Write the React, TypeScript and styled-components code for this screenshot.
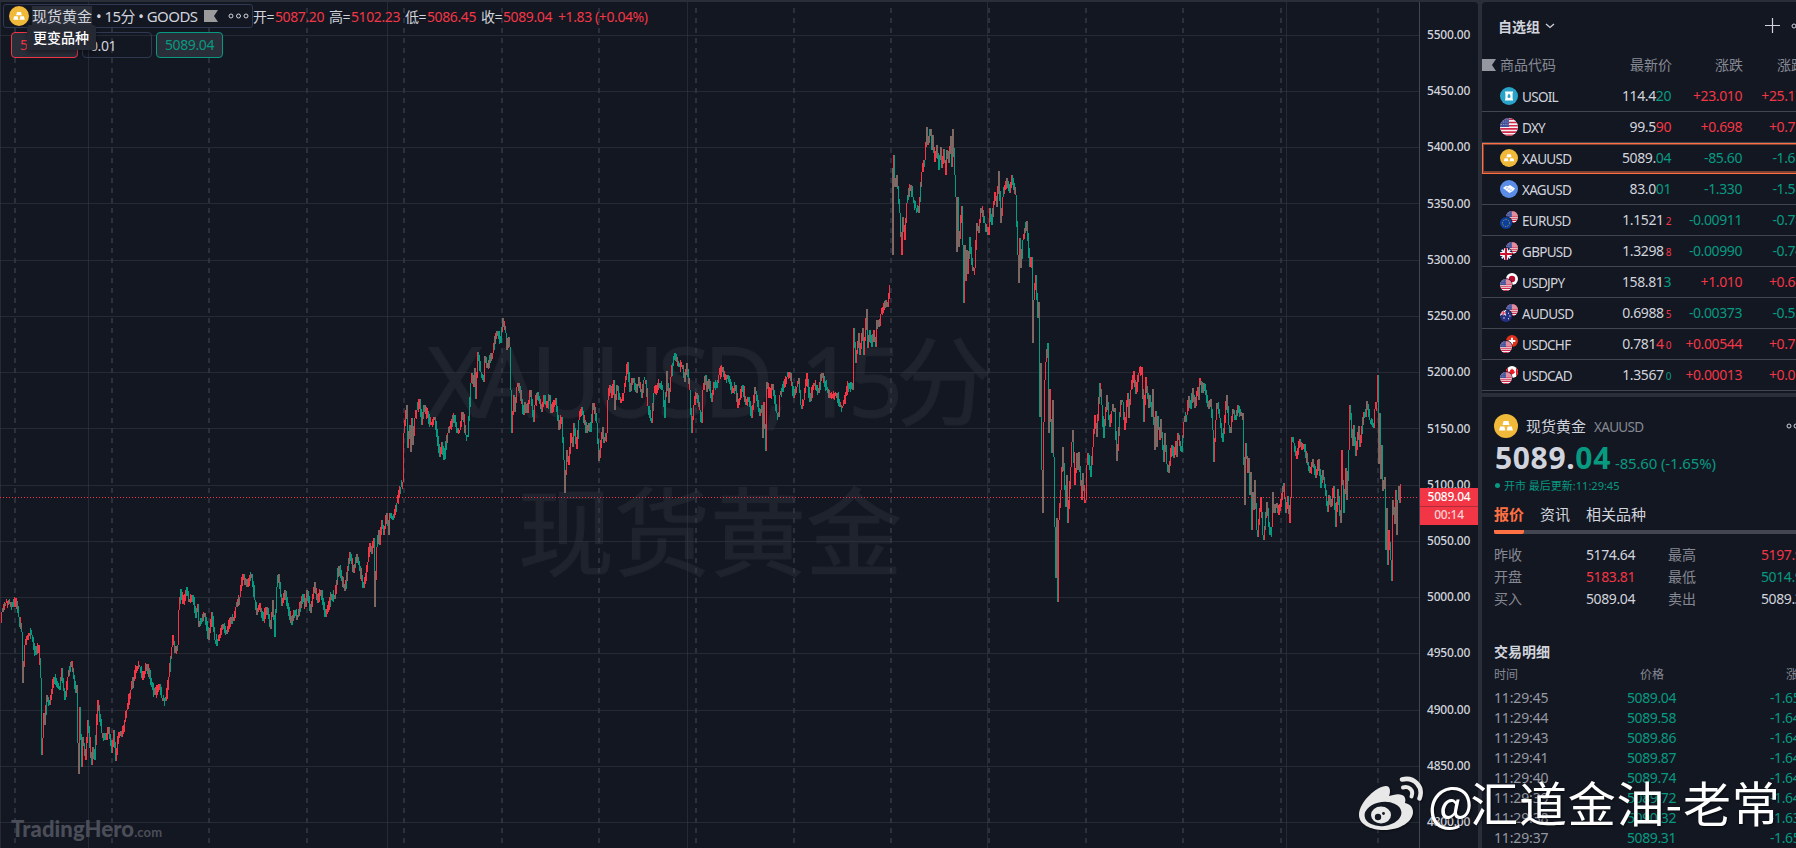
import React from 'react';
import styled, { createGlobalStyle, css } from 'styled-components';

const UP = '#f23645';
const DOWN = '#089981';
const TEXT = '#d1d4dc';
const MUTED = '#868993';
const BG = '#131722';
const LINE = '#2a2e39';

const GlobalStyle = createGlobalStyle`
  * { box-sizing: border-box; }
  body {
    margin: 0;
    overflow: hidden;
    background: ${BG};
    color: ${TEXT};
    font-family: "Noto Sans", "Noto Sans CJK SC", sans-serif;
    font-size: 14px;
    letter-spacing: -0.4px;
    white-space: nowrap;
  }
  svg { flex: none; }
`;

const Root = styled.div`
  position: relative;
  display: flex;
  width: 100vw;
  height: 100vh;
  padding-top: 2px;
  gap: 4px;
  overflow: hidden;
  background: ${LINE};
`;

const ChartPanel = styled.section`
  position: relative;
  display: flex;
  flex: none;
  width: 1478px;
  height: 846px;
  background: ${BG};
  border-top-right-radius: 4px;
  overflow: hidden;
`;

const Plot = styled.svg`
  display: block;
  flex: none;
  width: 1419px;
  height: 846px;
`;

const PriceScale = styled.div`
  flex: 1;
  border-left: 1px solid #434651;
  padding-top: 5px;
`;

const ScaleLabel = styled.div`
  height: 56.23px;
  line-height: 56.23px;
  padding-left: 7px;
  font-size: 12px;
  font-weight: 500;
  letter-spacing: -0.2px;
`;

const PriceTag = styled.div`
  position: absolute;
  right: 0;
  top: 486px;
  width: 58px;
  height: 37px;
  background: ${UP};
  color: #fff;
  font-size: 12px;
  font-weight: 500;
  letter-spacing: -0.2px;
  text-align: center;
  div { height: 18px; line-height: 17px; }
  div + div { line-height: 15px; border-top: 1px solid #b02c3b; color: #fbd0d4; }
`;

const Legend = styled.div`
  position: absolute;
  left: 3px;
  top: 2px;
  display: flex;
  align-items: center;
  height: 24px;
`;

const SymbolBox = styled.div`
  display: flex;
  align-items: center;
  width: 250px;
  height: 24px;
  padding-left: 5px;
  border: 1px solid #2f3a52;
  border-radius: 3px;
  background: ${BG};
`;

const SymbolName = styled.span<{ $left: number; $width: number; $active?: boolean }>`
  margin-left: ${p => p.$left}px;
  width: ${p => p.$width}px;
  line-height: 20px;
  font-size: 15px;
  letter-spacing: ${p => p.$active ? 0 : -0.55}px;
  ${p => p.$active && css`background: ${LINE};`}
`;

const Ohlc = styled.span<{ $gap: number }>`
  width: 49px;
  color: ${UP};
  margin-right: ${p => p.$gap}px;
`;

const OhlcKey = styled.span`
  width: 22px;
`;

const OrderRow = styled.div`
  position: absolute;
  left: 11px;
  top: 30px;
  display: flex;
  gap: 4px;
`;

const OrderBox = styled.div<{ $color: string; $filled?: boolean }>`
  width: 67px;
  height: 26px;
  line-height: 24px;
  padding-left: 8px;
  border: 1px solid ${p => p.$color};
  border-radius: 4px;
  color: ${p => p.$color};
  background: ${p => p.$filled ? LINE : BG};
`;

const AmountBox = styled(OrderBox)`
  width: 70px;
  padding-left: 7px;
  line-height: 26px;
  color: ${TEXT};
  background: transparent;
`;

const Tooltip = styled.div`
  position: absolute;
  left: 27px;
  top: 23px;
  width: 69px;
  height: 25px;
  line-height: 25px;
  padding-left: 6px;
  border-radius: 3px;
  background: #252934;
  color: #fff;
  font-weight: 500;
  letter-spacing: 0;
  box-shadow: 0 3px 5px rgba(0, 0, 0, 0.35);
`;

const Brand = styled.div`
  position: absolute;
  left: 11px;
  top: 813px;
  color: #4b4e59;
  font-family: Lato, sans-serif;
  font-size: 22px;
  font-weight: 900;
  line-height: 28px;
  letter-spacing: 0.1px;
  span { font-size: 13px; font-weight: 700; }
`;

const Side = styled.aside`
  display: flex;
  flex-direction: column;
  flex: none;
  gap: 4px;
  width: 332px;
`;

const Watchlist = styled.div`
  height: 391px;
  background: ${BG};
  border-top-left-radius: 4px;
`;

const WatchTitle = styled.div`
  display: flex;
  align-items: center;
  height: 47px;
  padding: 0 0 0 16px;
  font-weight: 700;
  letter-spacing: 0;
  .chevron { margin-left: 5px; }
  .plus { margin-left: 210px; }
  .more { margin-left: 11px; }
`;

const WatchHead = styled.div`
  display: grid;
  grid-template-columns: 18px 88px 84px 71px 71px;
  align-items: center;
  height: 32px;
  color: ${MUTED};
  letter-spacing: 0;
  text-align: right;
  span { padding-bottom: 2px; }
  span:nth-child(2) { text-align: left; }
  span:last-child { text-align: left; padding-left: 34px; }
`;

const WatchRow = styled.div<{ $selected?: boolean }>`
  display: grid;
  grid-template-columns: 40px 65px 84px 71px 72px;
  align-items: center;
  height: 31px;
  border-bottom: 1px solid #434651;
  text-align: right;
  line-height: 18px;
  svg { margin-left: 18px; }
  ${p => p.$selected && css`
    outline: 1px solid #ff7043;
    outline-offset: -1px;
    border-bottom-color: #ff7043;
    box-shadow: inset 0 0 0 2px #7d4234;
  `}
`;

const Ticker = styled.span`
  text-align: left;
  padding-top: 2px;
  font-size: 13.5px;
  letter-spacing: -0.7px;
`;

const Tone = styled.span<{ $color: string; $small?: boolean }>`
  color: ${p => p.$color};
  ${p => p.$small && css`font-size: 10px; margin-left: 2px;`}
`;

const Details = styled.div`
  flex: 1;
  padding: 17px 0 0 12px;
  background: ${BG};
  overflow: hidden;
`;

const DetailHead = styled.div`
  display: flex;
  align-items: center;
  height: 24px;
  h2 {
    margin: 0 8px 2px 8px;
    font-size: 15px;
    font-weight: 400;
    letter-spacing: 0;
  }
  small { width: 192px; padding-top: 1px; font-size: 13.5px; letter-spacing: -0.7px; color: ${MUTED}; }
`;

const BigPrice = styled.div`
  display: flex;
  align-items: baseline;
  height: 41px;
  padding-left: 1px;
  line-height: 39px;
  font-size: 30px;
  font-weight: 700;
  letter-spacing: 0.65px;
  small {
    margin-left: 4px;
    font-size: 15px;
    font-weight: 400;
    letter-spacing: -0.15px;
    color: ${DOWN};
  }
`;

const Status = styled.div`
  display: flex;
  align-items: center;
  height: 14px;
  line-height: 12px;
  padding-bottom: 1px;
  color: ${DOWN};
  font-size: 11px;
  letter-spacing: 0;
  i { width: 5px; height: 5px; margin: 0 4px 0 1px; border-radius: 50%; background: ${DOWN}; }
`;

const TabBar = styled.div`
  display: flex;
  gap: 16px;
  height: 41px;
  border-bottom: 4px solid #434651;
  font-size: 15px;
  letter-spacing: 0;
`;

const Tab = styled.div<{ $active?: boolean }>`
  height: 41px;
  line-height: 42px;
  ${p => p.$active && css`
    color: #ff7043;
    font-weight: 700;
    border-bottom: 4px solid #ff7043;
    border-radius: 2px;
  `}
`;

const Quotes = styled.div`
  display: grid;
  grid-template-columns: 92px 82px 93px 60px;
  grid-auto-rows: 22px;
  align-items: center;
  margin-top: 9px;
  label { color: ${MUTED}; letter-spacing: 0; }
`;

const TradeTitle = styled.div`
  margin-top: 31px;
  height: 24px;
  line-height: 24px;
  font-weight: 700;
  letter-spacing: 0;
`;

const TradeRow = styled.div<{ $head?: boolean }>`
  display: grid;
  grid-template-columns: 133px 143px 60px;
  height: ${p => p.$head ? 24 : 20}px;
  line-height: ${p => p.$head ? 22 : 20}px;
  color: ${p => p.$head ? MUTED : DOWN};
  ${p => p.$head && css`
    font-size: 12px;
    letter-spacing: 0;
    span + span { padding-left: 13px; }
    span:last-child { padding-left: 16px; }
  `}
  time { color: #9598a1; letter-spacing: -0.15px; }
`;

const Signature = styled.div`
  position: absolute;
  left: 1357px;
  top: 772px;
  display: flex;
  align-items: center;
  color: #fff;
  font-family: "Noto Sans CJK SC", sans-serif;
  font-size: 48px;
  line-height: 58px;
  letter-spacing: 0.8px;
  filter: drop-shadow(1px 1px 1px rgba(0, 0, 0, 0.55));
  svg { margin-right: 4px; }
  span { padding-bottom: 4px; }
  span:first-of-type { margin-right: -4px; }
`;

// swing points of the price line: x, y in plot pixels
const SWINGS: number[][] = [
  [1, 623], [2, 612], [6, 603], [11, 602], [14, 607], [16, 598], [19, 617], [22, 632], [23, 683], [25, 645], [29, 633],
  [32, 635], [36, 655], [39, 645], [41, 678], [42, 755], [43, 738], [44, 713], [45, 725], [47, 695], [50, 705], [54, 677],
  [60, 690], [62, 668], [65, 700], [68, 677], [72, 661], [76, 693], [77, 685], [78, 743], [79, 774], [80, 707], [82, 767],
  [83, 737], [86, 760], [88, 720], [92, 765], [93, 747], [95, 760], [98, 700], [102, 733], [106, 740], [109, 727],
  [112, 753], [114, 730], [116, 761], [119, 732], [122, 737], [127, 710], [131, 690], [137, 666], [140, 667], [143, 680],
  [147, 664], [155, 695], [160, 684], [162, 698], [166, 701], [169, 677], [172, 647], [173, 635], [175, 653], [178, 645],
  [179, 610], [181, 589], [183, 604], [187, 587], [189, 602], [193, 595], [196, 618], [198, 604], [199, 627], [205, 613],
  [209, 640], [212, 612], [215, 640], [219, 641], [223, 624], [227, 634], [231, 617], [234, 621], [236, 607], [240, 597],
  [243, 574], [247, 587], [252, 574], [255, 600], [257, 615], [260, 603], [263, 621], [267, 607], [271, 629], [273, 600],
  [275, 637], [277, 587], [279, 574], [282, 606], [285, 590], [292, 625], [295, 610], [297, 620], [303, 594], [306, 607],
  [307, 590], [311, 613], [315, 582], [318, 603], [321, 590], [326, 617], [332, 594], [335, 599], [339, 566], [345, 591],
  [350, 552], [354, 573], [357, 554], [364, 588], [368, 562], [370, 543], [372, 554], [374, 538], [375, 607], [377, 547],
  [379, 530], [380, 545], [382, 520], [384, 535], [387, 513], [389, 535], [390, 513], [393, 520], [397, 503], [401, 487],
  [403, 482], [404, 433], [407, 405], [408, 448], [410, 425], [411, 452], [412, 418], [413, 445], [415, 418], [417, 410],
  [420, 399], [422, 425], [424, 405], [431, 425], [435, 417], [440, 457], [442, 442], [444, 460], [448, 433], [455, 415],
  [457, 433], [460, 430], [463, 412], [466, 435], [468, 437], [471, 383], [472, 373], [474, 387], [475, 368], [476, 399],
  [478, 352], [481, 372], [484, 382], [485, 356], [487, 368], [493, 353], [497, 331], [501, 343], [503, 318], [506, 333],
  [507, 350], [509, 337], [510, 347], [511, 390], [512, 433], [514, 395], [515, 412], [517, 387], [519, 383], [524, 415],
  [525, 402], [527, 413], [531, 390], [534, 422], [535, 405], [538, 392], [542, 412], [544, 395], [547, 408], [550, 395],
  [551, 413], [556, 398], [559, 430], [562, 417], [564, 460], [565, 493], [567, 450], [569, 465], [571, 433], [573, 447],
  [574, 423], [577, 449], [579, 420], [582, 407], [587, 433], [589, 423], [591, 432], [593, 403], [597, 423], [599, 461],
  [603, 427], [604, 443], [607, 433], [608, 400], [610, 385], [612, 398], [614, 380], [615, 410], [617, 385], [621, 403],
  [624, 393], [628, 362], [630, 392], [633, 378], [637, 393], [639, 377], [642, 398], [644, 380], [646, 380], [648, 406],
  [652, 423], [654, 393], [660, 383], [663, 390], [665, 418], [667, 371], [669, 403], [671, 377], [675, 353], [679, 367],
  [683, 365], [685, 382], [687, 363], [690, 390], [692, 433], [694, 405], [697, 393], [700, 410], [702, 423], [703, 390],
  [706, 375], [707, 392], [709, 379], [712, 402], [714, 382], [717, 388], [719, 375], [723, 367], [725, 380], [728, 375],
  [733, 393], [736, 385], [738, 408], [743, 385], [746, 405], [749, 397], [752, 418], [755, 387], [760, 416], [762, 405],
  [763, 438], [764, 402], [766, 451], [767, 382], [770, 398], [773, 384], [777, 413], [779, 417], [780, 395], [787, 377],
  [790, 372], [794, 398], [797, 387], [799, 378], [801, 405], [802, 409], [804, 400], [807, 373], [810, 402], [814, 383],
  [819, 393], [822, 373], [830, 398], [837, 393], [840, 407], [843, 406], [849, 383], [853, 390], [854, 328], [856, 363],
  [859, 333], [860, 355], [863, 328], [864, 355], [867, 309], [868, 348], [870, 330], [872, 347], [874, 330], [876, 347],
  [877, 320], [879, 327], [881, 314], [886, 300], [888, 307], [890, 285],
  [892, 168], [893, 255], [894, 155], [895, 187], [897, 175], [900, 213], [902, 255], [903, 217], [905, 240], [907, 203],
  [911, 185], [913, 197], [916, 208], [919, 213], [922, 172], [925, 160], [927, 127], [928, 145], [931, 129], [932, 150],
  [933, 135], [935, 162], [937, 145], [939, 170], [941, 147], [942, 168], [944, 149], [946, 175], [947, 150], [949, 163],
  [951, 136], [952, 167], [953, 129], [955, 175], [956, 197], [957, 252], [958, 197], [959, 247], [962, 206], [963, 245],
  [964, 303], [965, 245], [966, 281], [967, 250], [968, 274], [970, 237], [973, 271], [975, 268], [977, 223], [979, 233],
  [981, 208], [985, 223], [989, 235], [990, 208], [992, 225], [995, 192], [997, 207], [999, 171], [1001, 223], [1003, 197],
  [1007, 178], [1010, 193], [1012, 175], [1016, 195], [1018, 255], [1019, 283], [1020, 238], [1021, 268], [1023, 240],
  [1027, 221], [1030, 267], [1032, 257], [1033, 343], [1034, 300], [1036, 275], [1038, 318], [1039, 302], [1040, 417],
  [1041, 363], [1042, 470], [1043, 513], [1044, 422], [1045, 380], [1046, 362], [1048, 343], [1049, 433], [1050, 389],
  [1052, 453], [1053, 400], [1054, 457], [1055, 527], [1056, 578], [1057, 518], [1058, 602], [1059, 520], [1061, 490],
  [1063, 447], [1066, 507], [1067, 475], [1068, 523], [1071, 467], [1072, 442], [1073, 430], [1075, 485], [1077, 453],
  [1078, 470], [1079, 452], [1082, 500], [1083, 473], [1085, 503], [1086, 500], [1087, 465], [1088, 453], [1091, 477],
  [1093, 447], [1095, 415], [1097, 437], [1100, 383], [1102, 405], [1104, 438], [1107, 395], [1110, 427], [1112, 411],
  [1115, 408], [1117, 461], [1121, 400], [1123, 402], [1125, 430], [1128, 393], [1129, 418], [1131, 390], [1134, 371],
  [1136, 394], [1139, 373], [1142, 367], [1144, 422], [1146, 377], [1149, 408], [1150, 395], [1152, 417], [1153, 389],
  [1155, 450], [1156, 411], [1157, 447], [1158, 416], [1160, 440], [1161, 419], [1164, 462], [1165, 433], [1167, 464],
  [1169, 473], [1172, 445], [1174, 458], [1176, 441], [1177, 457], [1178, 433], [1182, 452], [1184, 422], [1187, 415],
  [1189, 396], [1191, 409], [1193, 388], [1195, 408], [1198, 387], [1199, 400], [1200, 378], [1203, 393], [1204, 383],
  [1209, 409], [1211, 399], [1213, 430], [1214, 462], [1216, 420], [1217, 403], [1220, 418], [1223, 442], [1227, 395],
  [1229, 425], [1231, 433], [1233, 409], [1236, 420], [1238, 405], [1241, 416], [1243, 413], [1245, 505], [1246, 443],
  [1248, 473], [1249, 458], [1250, 495], [1251, 472], [1252, 530], [1253, 492], [1254, 510], [1255, 480], [1257, 530],
  [1258, 537], [1261, 497], [1263, 535], [1264, 540], [1267, 502], [1270, 535], [1272, 527], [1273, 492], [1274, 513],
  [1277, 503], [1279, 515], [1284, 483], [1286, 513], [1288, 496], [1290, 523], [1291, 498], [1292, 437], [1294, 443],
  [1297, 459], [1300, 439], [1302, 450], [1304, 444], [1310, 473], [1313, 459], [1316, 478], [1319, 459], [1321, 488],
  [1323, 470], [1328, 512], [1329, 495], [1331, 507], [1334, 486], [1336, 527], [1338, 489], [1341, 523], [1342, 450],
  [1344, 513], [1346, 468], [1347, 500], [1349, 450], [1350, 405], [1353, 446], [1354, 425], [1356, 456], [1359, 426],
  [1360, 447], [1364, 412], [1366, 417], [1367, 401], [1370, 420], [1374, 428], [1375, 409], [1377, 402], [1378, 375],
  [1379, 464], [1380, 413], [1381, 479], [1382, 445], [1383, 491], [1385, 477], [1386, 550], [1387, 508], [1388, 565],
  [1389, 530], [1391, 560], [1392, 581], [1393, 500], [1395, 524], [1396, 490], [1397, 535], [1398, 500], [1399, 486],
  [1400, 503], [1401, 484],
];

// small repeatable jitter so neighbouring wicks differ in length
const jitter = (n: number) => {
  const v = Math.sin(n * 12.9898) * 43758.5453;
  return v - Math.floor(v);
};

function buildCandles() {
  let up = '';
  let down = '';
  for (let i = 1; i < SWINGS.length; i++) {
    const [x0, y0] = SWINGS[i - 1];
    const [x1, y1] = SWINGS[i];
    const steep = x1 - x0 === 1;
    // weekend gap
    if (x0 === 890) continue;
    for (let x = x0; x < x1; x++) {
      const a = y0 + (y1 - y0) * (x - x0) / (x1 - x0);
      const b = y0 + (y1 - y0) * (x + 1 - x0) / (x1 - x0);
      const first = x === x0;
      const last = x === x1 - 1;
      const wick = steep ? 0 : 1 + jitter(x) * 5;
      const tail = steep ? 0 : 1 + jitter(x + 0.5) * 5;
      const dir = y1 > y0;
      const top = Math.round(Math.min(a, b) - ((dir && first) || (!dir && last) ? 0 : wick));
      const bottom = Math.round(Math.max(a, b) + ((!dir && first) || (dir && last) ? 0 : tail));
      const flip = !steep && jitter(x * 1.7 + 3) > 0.82;
      const d = `M${x + 0.5} ${top}V${Math.max(bottom, top + 2)}`;
      if (dir !== flip) down += d; else up += d;
    }
  }
  return { up, down };
}

const CANDLES = buildCandles();
const H_LINES = [35, 91, 147, 203, 260, 316, 372, 428, 485, 541, 597, 653, 710, 766, 822];
const V_LINES = [88, 387, 687, 987, 1286];
const DAY_LINES = [15, 112, 209, 307, 404, 502, 599, 696, 794, 891, 989, 1086, 1183, 1281, 1378];

function Chart() {
  return (<Plot viewBox="0 2 1419 846">
    <g fill="#1f232d" stroke="#1f232d" strokeWidth="1.2" fontSize="96" fontFamily='"Noto Sans", "Noto Sans CJK SC", sans-serif'>
      <text x="427" y="417" textLength="565" letterSpacing="0">XAUUSD, 15分</text>
      <text x="518" y="568" letterSpacing="0">现货黄金</text>
    </g>
    <g stroke="#363a45" strokeOpacity="0.55" shapeRendering="crispEdges">
      <path d="M0.5 2V848" />
      {H_LINES.map(y => <path key={y} d={`M0 ${y + 0.5}H1419`} />)}
      {V_LINES.map(x => <path key={x} d={`M${x + 0.5} 2V848`} />)}
    </g>
    <g stroke="#363a45" strokeOpacity="0.75" strokeWidth="2" strokeDasharray="5 5" shapeRendering="crispEdges">
      {DAY_LINES.map(x => <path key={x} d={`M${x} 8V848`} />)}
    </g>
    <path d={CANDLES.down} stroke={DOWN} shapeRendering="crispEdges" />
    <path d={CANDLES.up} stroke={UP} shapeRendering="crispEdges" />
    <path d="M0 497.5H1419" stroke={UP} strokeDasharray="1 2" shapeRendering="crispEdges" />
  </Plot>);
}

function GoldIcon(props: { size: number }) {
  return (<svg width={props.size} height={props.size} viewBox="0 0 18 18">
    <circle cx="9" cy="9" r="9" fill="#f0b93a" />
    <path d="M7.2 5.3h3.6l.8 3H6.4zM4.6 9.3h3.2l.7 3H3.8zM10.2 9.3h3.2l.8 3H9.5z" fill="#fff" />
  </svg>);
}

function MoreIcon() {
  return (<svg width="20" height="6" viewBox="0 0 20 6" fill="none" stroke={TEXT} className="more">
    <circle cx="3" cy="3" r="2" /><circle cx="10" cy="3" r="2" /><circle cx="17" cy="3" r="2" />
  </svg>);
}

function FlagMark(props: { width: number; color: string }) {
  return (<svg width={props.width} height="12" viewBox="0 0 14 12" preserveAspectRatio="none">
    <path d="M0 0h14l-4 6 4 6H0z" fill={props.color} />
  </svg>);
}

// flag artwork inside an 18x18 box
function FlagArt(props: { code: string }) {
  switch (props.code) {
    case 'us':
      return (<g>
        <rect width="18" height="18" fill="#f4f0f2" />
        <path d="M0 1.3h18M0 4.5h18M0 7.7h18M0 10.9h18M0 14.1h18M0 17.3h18" stroke="#d0284a" strokeWidth="1.6" />
        <rect width="9" height="9" fill="#42529a" />
        <path d="M1 4h8M1 6.5h8M3 1.8h6" stroke="#a9b2d8" strokeWidth=".8" strokeDasharray="1 1.2" />
      </g>);
    case 'eu':
      return (<g>
        <rect width="18" height="18" fill="#0b3d9c" />
        <circle cx="9" cy="9" r="5.2" fill="none" stroke="#d8ba3a" strokeWidth="1.3" strokeDasharray="1.2 1.52" />
      </g>);
    case 'gb':
      return (<g>
        <rect width="18" height="18" fill="#123082" />
        <path d="M0 0l18 18M18 0L0 18" stroke="#fff" strokeWidth="2.4" />
        <path d="M9 0v18M0 9h18" stroke="#fff" strokeWidth="6" />
        <path d="M9 0v18M0 9h18" stroke="#d0102f" strokeWidth="3.2" />
      </g>);
    case 'jp':
      return <g><rect width="18" height="18" fill="#fff" /><circle cx="9" cy="9" r="4.8" fill="#bd0a30" /></g>;
    case 'au':
      return (<g>
        <rect width="18" height="18" fill="#232f80" />
        <path d="M0 0l9 8M9 0L0 8M5 0v8M0 4.5h9" stroke="#fff" strokeWidth="1.8" />
        <path d="M5 0v8M0 4.5h9" stroke="#e0203c" strokeWidth="1.3" />
        <path d="M5 12h2M12 5h1.5M12 13h1.5M14 9h1.5" stroke="#fff" strokeWidth="1.5" />
      </g>);
    case 'ch':
      return <g><rect width="18" height="18" fill="#e0301e" /><path d="M9 4v10M4 9h10" stroke="#fff" strokeWidth="3" /></g>;
    default:
      return (<g>
        <rect width="18" height="18" fill="#fff" />
        <path d="M0 0h3v18H0zM15 0h3v18h-3zM9 3.5l1.5 2.5 1.5-.5-.3 3 2.3-.8-1 2.3-3 2.5H8l-3-2.5-1-2.3 2.3.8-.3-3 1.5.5z" fill="#ee1620" />
      </g>);
  }
}

function PairIcon(props: { back: string; front: string; id: string }) {
  return (<svg width="18" height="18" viewBox="0 0 18 18">
    <defs>
      <clipPath id={`${props.id}-disc`}><circle cx="9" cy="9" r="9" /></clipPath>
    </defs>
    <g transform="translate(6) scale(0.6667)" clipPath={`url(#${props.id}-disc)`}><FlagArt code={props.back} /></g>
    <circle cx="6" cy="12" r="6.7" fill={BG} />
    <g transform="translate(0 6) scale(0.6667)" clipPath={`url(#${props.id}-disc)`}><FlagArt code={props.front} /></g>
  </svg>);
}

const PAIRS: Record<string, [string, string]> = {
  EURUSD: ['us', 'eu'], GBPUSD: ['us', 'gb'], USDJPY: ['jp', 'us'],
  AUDUSD: ['us', 'au'], USDCHF: ['ch', 'us'], USDCAD: ['ca', 'us'],
};

function SymbolIcon(props: { symbol: string }) {
  const pair = PAIRS[props.symbol];
  if (pair) return <PairIcon back={pair[0]} front={pair[1]} id={props.symbol} />;
  if (props.symbol === 'XAUUSD') return <GoldIcon size={18} />;
  if (props.symbol === 'DXY') {
    return (<svg width="18" height="18" viewBox="0 0 18 18">
      <clipPath id="dxy"><circle cx="9" cy="9" r="9" /></clipPath>
      <g clipPath="url(#dxy)"><FlagArt code="us" /></g>
    </svg>);
  }
  if (props.symbol === 'USOIL') {
    return (<svg width="18" height="18" viewBox="0 0 18 18">
      <circle cx="9" cy="9" r="9" fill="#29a3c8" />
      <path d="M5 4.5h8v1l-.4.5v6l.4.5v1H5v-1l.4-.5V6L5 5.5z" fill="#fff" />
      <path d="M9 6.5c1 1.3 1.5 2 1.5 2.9a1.5 1.5 0 0 1-3 0c0-.9.5-1.6 1.5-2.9z" fill="#29a3c8" />
    </svg>);
  }
  return (<svg width="18" height="18" viewBox="0 0 18 18">
    <circle cx="9" cy="9" r="9" fill="#5b8de8" />
    <path d="M3 8l3-2.2 2 .4L10 5l5 3.5-2 2.5-3.500 2z" fill="#fff" />
    <path d="M5 9.5L8 7M7.5 10.5l3-2.800M9.500 11.500l3-2.700M6 7l6 4" stroke="#9dbbf2" strokeWidth=".6" />
  </svg>);
}

type Row = { symbol: string; price: string; tick: string; pip?: string; tickColor: string; change: string; pct: string };

const ROWS: Row[] = [
  { symbol: 'USOIL', price: '114.4', tick: '20', tickColor: DOWN, change: '+23.010', pct: '+25.17%' },
  { symbol: 'DXY', price: '99.5', tick: '90', tickColor: UP, change: '+0.698', pct: '+0.71%' },
  { symbol: 'XAUUSD', price: '5089.', tick: '04', tickColor: DOWN, change: '-85.60', pct: '-1.65%' },
  { symbol: 'XAGUSD', price: '83.0', tick: '01', tickColor: DOWN, change: '-1.330', pct: '-1.58%' },
  { symbol: 'EURUSD', price: '1.1521', tick: '', pip: '2', tickColor: UP, change: '-0.00911', pct: '-0.78%' },
  { symbol: 'GBPUSD', price: '1.3298', tick: '', pip: '8', tickColor: UP, change: '-0.00990', pct: '-0.74%' },
  { symbol: 'USDJPY', price: '158.81', tick: '3', tickColor: DOWN, change: '+1.010', pct: '+0.64%' },
  { symbol: 'AUDUSD', price: '0.6988', tick: '', pip: '5', tickColor: UP, change: '-0.00373', pct: '-0.53%' },
  { symbol: 'USDCHF', price: '0.781', tick: '4', pip: '0', tickColor: UP, change: '+0.00544', pct: '+0.70%' },
  { symbol: 'USDCAD', price: '1.3567', tick: '', pip: '0', tickColor: DOWN, change: '+0.00013', pct: '+0.01%' },
];

const TRADES = [
  ['11:29:45', '5089.04', '-1.65%'],
  ['11:29:44', '5089.58', '-1.64%'],
  ['11:29:43', '5089.86', '-1.64%'],
  ['11:29:41', '5089.87', '-1.64%'],
  ['11:29:40', '5089.74', '-1.64%'],
  ['11:29:39', '5089.72', '-1.64%'],
  ['11:29:38', '5090.32', '-1.63%'],
  ['11:29:37', '5089.31', '-1.65%'],
];

const SCALE = Array.from({ length: 15 }, (_, i) => (5500 - i * 50).toFixed(2));

function WatchlistPanel() {
  return (<Watchlist>
    <WatchTitle>
      自选组
      <svg className="chevron" width="10" height="6" viewBox="0 0 10 6" fill="none" stroke={TEXT} strokeWidth="1.3">
        <path d="M1 1l4 3.5L9 1" />
      </svg>
      <svg className="plus" width="15" height="15" viewBox="0 0 15 15" stroke={TEXT} strokeWidth="1.2">
        <path d="M7.5 0v15M0 7.5h15" />
      </svg>
      <MoreIcon />
    </WatchTitle>
    <WatchHead>
      <FlagMark width={14} color="#9598a1" />
      <span>商品代码</span><span>最新价</span><span>涨跌</span><span>涨跌%</span>
    </WatchHead>
    {ROWS.map(r => {
      const tone = r.change[0] === '+' ? UP : DOWN;
      return (<WatchRow key={r.symbol} $selected={r.symbol === 'XAUUSD'}>
        <SymbolIcon symbol={r.symbol} />
        <Ticker>{r.symbol}</Ticker>
        <span>
          {r.price}<Tone $color={r.tickColor}>{r.tick}</Tone>
          {r.pip && <Tone $color={r.tickColor} $small>{r.pip}</Tone>}
        </span>
        <Tone $color={tone}>{r.change}</Tone>
        <Tone $color={tone}>{r.pct}</Tone>
      </WatchRow>);
    })}
  </Watchlist>);
}

function DetailsPanel() {
  return (<Details>
    <DetailHead>
      <GoldIcon size={24} />
      <h2>现货黄金</h2>
      <small>XAUUSD</small>
      <MoreIcon />
    </DetailHead>
    <BigPrice>5089.<Tone $color={DOWN}>04</Tone><small>-85.60 (-1.65%)</small></BigPrice>
    <Status><i />开市 最后更新:11:29:45</Status>
    <TabBar>
      <Tab $active>报价</Tab>
      <Tab>资讯</Tab>
      <Tab>相关品种</Tab>
    </TabBar>
    <Quotes>
      <label>昨收</label><span>5174.64</span><label>最高</label><Tone $color={UP}>5197.90</Tone>
      <label>开盘</label><Tone $color={UP}>5183.81</Tone><label>最低</label><Tone $color={DOWN}>5014.90</Tone>
      <label>买入</label><span>5089.04</span><label>卖出</label><span>5089.34</span>
    </Quotes>
    <TradeTitle>交易明细</TradeTitle>
    <TradeRow $head><span>时间</span><span>价格</span><span>涨跌</span></TradeRow>
    {TRADES.map(([time, price, pct]) => <TradeRow key={time}>
      <time>{time}</time><span>{price}</span><span>{pct}</span>
    </TradeRow>)}
  </Details>);
}

export default function App() {
  return (<Root>
    <GlobalStyle />
    <ChartPanel>
      <Chart />
      <PriceScale>
        {SCALE.map(p => <ScaleLabel key={p}>{p}</ScaleLabel>)}
      </PriceScale>
      <PriceTag><div>5089.04</div><div>00:14</div></PriceTag>
      <OrderRow>
        <OrderBox $color={UP} $filled>5088.70</OrderBox>
        <AmountBox $color="#2f3a52">0.01</AmountBox>
        <OrderBox $color={DOWN} $filled>5089.04</OrderBox>
      </OrderRow>
      <Legend>
        <SymbolBox>
          <GoldIcon size={20} />
          <SymbolName $left={3} $width={60} $active>现货黄金</SymbolName>
          <SymbolName $left={4} $width={108}>• 15分 • GOODS</SymbolName>
          <FlagMark width={14} color="#9b9b9b" />
          <svg width="22" height="6" viewBox="0 0 22 6" fill="none" stroke={TEXT} style={{ marginLeft: 10 }}>
            <circle cx="3" cy="3" r="2" /><circle cx="10.5" cy="3" r="2" /><circle cx="18" cy="3" r="2" />
          </svg>
        </SymbolBox>
        <OhlcKey>开=</OhlcKey><Ohlc $gap={5}>5087.20</Ohlc>
        <OhlcKey>高=</OhlcKey><Ohlc $gap={5}>5102.23</Ohlc>
        <OhlcKey>低=</OhlcKey><Ohlc $gap={5}>5086.45</Ohlc>
        <OhlcKey>收=</OhlcKey><Ohlc $gap={6}>5089.04</Ohlc>
        <Tone $color={UP}>+1.83 (+0.04%)</Tone>
      </Legend>
      <Tooltip>更变品种</Tooltip>
      <Brand>TradingHero<span>.com</span></Brand>
    </ChartPanel>
    <Side>
      <WatchlistPanel />
      <DetailsPanel />
    </Side>
    <Signature>
      <svg width="67" height="60" viewBox="0 0 67 60">
        <path d="M29 13C20 13 2 29 2 42c0 9 11 15 25 15 17 0 29-9 29-18 0-5-3-8-8-9 1-4 0-7-3-8-4-2-9 0-13 1 2-5 1-10-3-10z" fill="#e8e8e8" />
        <ellipse cx="26" cy="41" rx="18.5" ry="12" fill={BG} transform="rotate(-7 26 41)" />
        <ellipse cx="24" cy="42" rx="10" ry="8.5" fill="#e8e8e8" />
        <circle cx="21" cy="44" r="3.2" fill={BG} />
        <circle cx="26.5" cy="40.5" r="1.4" fill={BG} />
        <path d="M45 6.5c12-3 22 7 17.5 19" fill="none" stroke="#e8e8e8" strokeWidth="4.5" strokeLinecap="round" />
        <path d="M46 14.5c6-2 11 3 8.5 9" fill="none" stroke="#e8e8e8" strokeWidth="4" strokeLinecap="round" />
      </svg>
      <span>@</span><span>汇道金油-老常</span>
    </Signature>
  </Root>);
}
